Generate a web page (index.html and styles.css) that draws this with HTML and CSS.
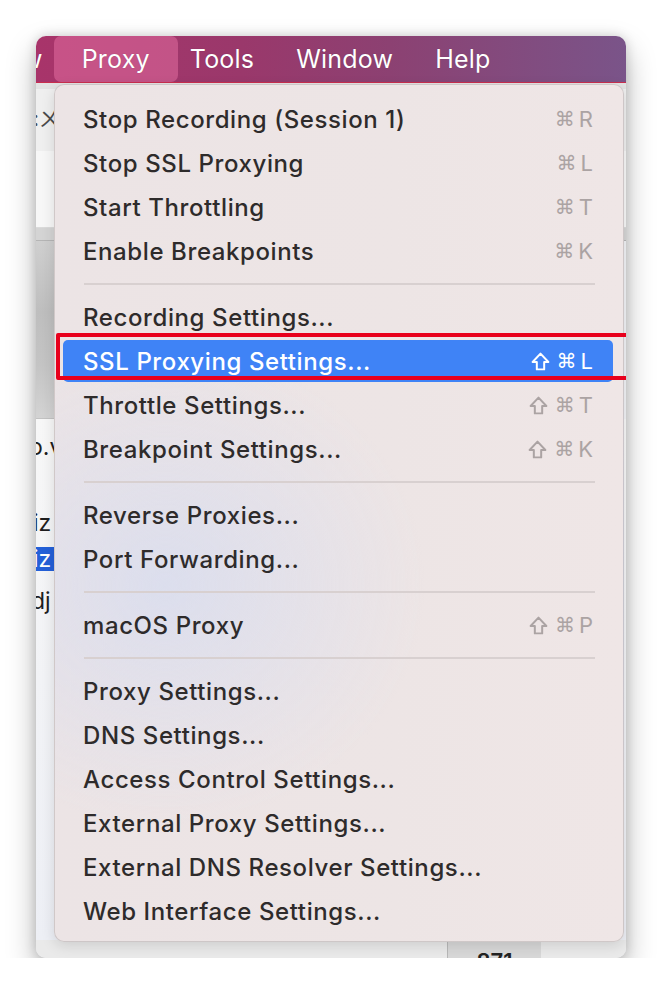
FILE: index.html
```html
<!DOCTYPE html>
<html lang="en">
<head>
    <meta charset="UTF-8">
    <meta name="viewport" content="width=device-width, initial-scale=1.0">
    <title>Proxy Menu</title>
    <link rel="stylesheet" href="styles.css">
</head>
<body>
    <div class="window">
        <div class="menubar">
            <span class="mb-item mb-cut">w</span>
            <span class="mb-item mb-active">Proxy</span>
            <span class="mb-item mb-tools">Tools</span>
            <span class="mb-item">Window</span>
            <span class="mb-item">Help</span>
        </div>

        <div class="app">
            <div class="app-side">
                <div class="side-head"></div>
                <div class="side-cell side-top"><span class="side-glyph">:ㄨ</span></div>
                <div class="side-cell side-blank"></div>
                <div class="side-bar"></div>
                <div class="side-panel"></div>
                <div class="side-list">
                    <div class="side-row row-ov">o.v</div>
                    <div class="side-row row-gap">iz</div>
                    <div class="side-row row-sel">iz</div>
                    <div class="side-row row-dj">dj</div>
                </div>
            </div>
            <div class="app-foot">
                <div class="foot-cell">871</div>
            </div>
        </div>

        <div class="dropdown">
            <div class="menu-row"><span>Stop Recording (Session 1)</span><span class="key"><span class="cmd">⌘</span><span>R</span></span></div>
            <div class="menu-row"><span>Stop SSL Proxying</span><span class="key"><span class="cmd">⌘</span><span>L</span></span></div>
            <div class="menu-row"><span>Start Throttling</span><span class="key"><span class="cmd">⌘</span><span>T</span></span></div>
            <div class="menu-row"><span>Enable Breakpoints</span><span class="key"><span class="cmd">⌘</span><span>K</span></span></div>
            <div class="menu-sep"></div>
            <div class="menu-row"><span>Recording Settings...</span></div>
            <div class="menu-row is-active"><span>SSL Proxying Settings...</span><span class="key"><svg class="shift" viewBox="0 0 20 20"><path d="M10 2.5 L17.5 10.5 H13.5 V17.5 H6.5 V10.5 H2.5 Z"/></svg><span class="cmd">⌘</span><span>L</span></span></div>
            <div class="menu-row"><span>Throttle Settings...</span><span class="key"><svg class="shift" viewBox="0 0 20 20"><path d="M10 2.5 L17.5 10.5 H13.5 V17.5 H6.5 V10.5 H2.5 Z"/></svg><span class="cmd">⌘</span><span>T</span></span></div>
            <div class="menu-row"><span>Breakpoint Settings...</span><span class="key"><svg class="shift" viewBox="0 0 20 20"><path d="M10 2.5 L17.5 10.5 H13.5 V17.5 H6.5 V10.5 H2.5 Z"/></svg><span class="cmd">⌘</span><span>K</span></span></div>
            <div class="menu-sep"></div>
            <div class="menu-row"><span>Reverse Proxies...</span></div>
            <div class="menu-row"><span>Port Forwarding...</span></div>
            <div class="menu-sep"></div>
            <div class="menu-row"><span>macOS Proxy</span><span class="key"><svg class="shift" viewBox="0 0 20 20"><path d="M10 2.5 L17.5 10.5 H13.5 V17.5 H6.5 V10.5 H2.5 Z"/></svg><span class="cmd">⌘</span><span>P</span></span></div>
            <div class="menu-sep"></div>
            <div class="menu-row"><span>Proxy Settings...</span></div>
            <div class="menu-row"><span>DNS Settings...</span></div>
            <div class="menu-row"><span>Access Control Settings...</span></div>
            <div class="menu-row"><span>External Proxy Settings...</span></div>
            <div class="menu-row"><span>External DNS Resolver Settings...</span></div>
            <div class="menu-row"><span>Web Interface Settings...</span></div>
        </div>

        <div class="callout"></div>
    </div>
</body>
</html>
```

FILE: styles.css
```css
body {
    margin: 0;
    padding: 0;
    background: #FFFFFF;
    font-family: "Inter", "Liberation Sans", sans-serif;
}

.window {
    position: relative;
    width: 590px;
    height: 922px;
    margin: 36px 0 0 36px;
    border-radius: 10px;
    overflow: hidden;
    background: #F1F2F5;
    box-shadow: 0 14px 30px rgba(0, 0, 0, 0.28), 0 0 12px rgba(0, 0, 0, 0.16);
    display: flex;
    flex-direction: column;
}

/* top menu bar */
.menubar {
    height: 46px;
    flex-shrink: 0;
    display: flex;
    align-items: stretch;
    background: linear-gradient(90deg, #A8346A 0%, #9A386B 35%, #8C4172 60%, #7A5489 100%);
    border-bottom: 1px solid #C92E4E;
}

.mb-item {
    display: flex;
    align-items: center;
    color: #FFFFFF;
    font-size: 25px;
    letter-spacing: 0.2px;
    margin-left: 42px;
    text-shadow: 0 0 1px rgba(0, 0, 0, 0.25);
}

.mb-cut {
    margin-left: -14px;
}

.mb-active {
    margin-left: 11px;
    padding: 0 28px 0 28px;
    border-radius: 7px;
    background: rgba(240, 120, 170, 0.45);
}

.mb-tools {
    margin-left: 12px;
}

/* app content behind the menu */
.app {
    flex: 1;
    display: flex;
    flex-direction: column;
}

.app-side {
    flex: 1;
    display: flex;
    flex-direction: column;
}

.side-head {
    height: 6px;
    background: #E3E3E3;
}

.side-cell {
    background: #EFEFEF;
}

.side-top {
    height: 62px;
}

.side-glyph {
    display: block;
    margin: 16px 0 0 -3px;
    font-size: 21px;
    line-height: 24px;
    color: #4A4A4A;
    font-family: "Noto Sans CJK SC", sans-serif;
}

.side-blank {
    height: 76px;
    background: #F7F7F7;
    border-bottom: 1px solid #DADADA;
}

.side-bar {
    height: 12px;
    background: #D4D4D4;
    border-bottom: 1px solid #B5B5B5;
}

.side-panel {
    height: 177px;
    width: 40px;
    background: linear-gradient(#CFCFCF, #BEBEBE 40%, #C4C4C4 70%, #D3D3D3);
    border-bottom: 1px solid #C2C2C2;
}

.side-list {
    flex: 1;
    background: linear-gradient(#F7F7F7, #EDEFF5);
    padding-top: 16px;
}

.side-row {
    width: 30px;
    height: 24px;
    line-height: 24px;
    font-size: 23px;
    color: #1E1E1E;
    text-indent: -7px;
    white-space: nowrap;
}

.row-gap {
    margin-top: 52px;
    text-indent: -3px;
}

.row-sel {
    margin-top: 12px;
    background: #2460D8;
    color: #FFFFFF;
    text-indent: -3px;
}

.row-dj {
    margin-top: 18px;
    text-indent: -5px;
}

.app-foot {
    height: 18px;
    background: #EAEAEA;
    display: flex;
    padding-left: 411px;
}

.foot-cell {
    width: 93px;
    background: #D8D8D8;
    border-left: 1px solid #B8B8B8;
    text-align: center;
    font-size: 22px;
    font-weight: 600;
    line-height: 42px;
    color: #222222;
}

/* dropdown menu */
.dropdown {
    position: absolute;
    left: 18px;
    top: 48px;
    width: 570px;
    box-sizing: border-box;
    padding: 12px 0 8px;
    border-radius: 10px;
    border: 1px solid rgba(0, 0, 0, 0.13);
    background:
        radial-gradient(ellipse 260px 240px at 110px 500px, rgba(214, 220, 240, 0.75), rgba(214, 220, 240, 0)),
        linear-gradient(90deg, #ECE4E5, #EDE5E5 60%, #EFE6E6);
    box-shadow: 0 4px 14px rgba(0, 0, 0, 0.12);
}

.menu-row {
    height: 44px;
    display: flex;
    align-items: center;
    justify-content: space-between;
    padding: 0 30px 0 28px;
    font-size: 24px;
    font-weight: 500;
    letter-spacing: 0.6px;
    color: #2E2B2B;
}

.menu-row.is-active {
    height: 42px;
    margin: 1px 10px 1px 8px;
    padding: 0 20px 0 20px;
    border-radius: 5px;
    background: #3F83F6;
    color: #FFFFFF;
}

.key {
    display: flex;
    align-items: center;
    gap: 4px;
    font-size: 22px;
    font-weight: 400;
    letter-spacing: 0;
    color: #ABA3A3;
}

.cmd {
    font-family: "DejaVu Sans", sans-serif;
    font-size: 20px;
}

.shift {
    width: 21px;
    height: 21px;
    margin-right: 2px;
    fill: none;
    stroke: currentColor;
    stroke-width: 1.9;
    stroke-linejoin: round;
}

.is-active .key {
    color: #FFFFFF;
}

.menu-sep {
    height: 22px;
    display: flex;
    align-items: center;
    padding: 0 28px 0 29px;
}

.menu-sep::before {
    content: "";
    flex: 1;
    height: 2px;
    background: #D8D0D0;
}

/* red annotation box */
.callout {
    position: absolute;
    left: 20px;
    top: 297px;
    width: 620px;
    height: 39px;
    border: 4px solid #E8001C;
    border-radius: 2px;
}
```
